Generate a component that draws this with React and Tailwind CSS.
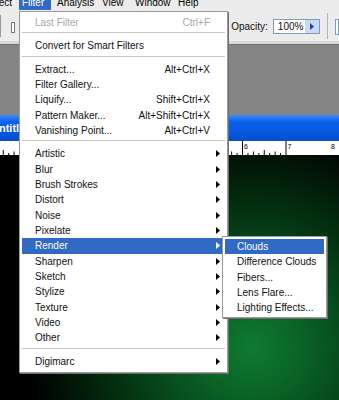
import React from "react";

const FONT = { fontFamily: '"Liberation Sans", Arial, sans-serif' };

function Arrow({ white }) {
  return (
    <svg width="4" height="7" viewBox="0 0 4 7" className="block">
      <path d="M0 0L4 3.5L0 7Z" fill={white ? "#ffffff" : "#000000"} />
    </svg>
  );
}

function Row({ label, shortcut, sub, disabled, active }) {
  return (
    <div
      className={
        active
          ? "h-[15.33px] flex items-center bg-[#316ac5] text-white"
          : disabled
          ? "h-[15.33px] flex items-center text-[#a7a7a7]"
          : "h-[15.33px] flex items-center text-[#111]"
      }
    >
      <span className="flex-1 pl-[13px] whitespace-nowrap">{label}</span>
      {shortcut ? <span className="whitespace-nowrap">{shortcut}</span> : null}
      <span className="w-[15px] pl-[6px] flex items-center">
        {sub ? <Arrow white={active} /> : null}
      </span>
    </div>
  );
}

function Sep() {
  return (
    <div className="h-[8px] pt-[2px]">
      <div className="h-[2px] border-t border-[#c4c4bc] border-b border-b-white" />
    </div>
  );
}

function SubRow({ label, active }) {
  return (
    <div
      className={
        active
          ? "h-[15.33px] flex items-center pl-[12px] bg-[#316ac5] text-white whitespace-nowrap"
          : "h-[15.33px] flex items-center pl-[12px] text-[#111] whitespace-nowrap"
      }
    >
      {label}
    </div>
  );
}

function Ruler() {
  const ticks = [];
  const unit = 43.5;
  const origin = 242;
  for (let i = -48; i <= 8; i++) {
    const x = origin + (i * unit) / 8;
    if (x < -1 || x > 340) continue;
    const m = ((i % 8) + 8) % 8;
    let h = 2;
    if (m === 0) h = 14;
    else if (m === 4) h = 5;
    else if (m === 2 || m === 6) h = 3.5;
    ticks.push(
      <line key={i} x1={x + 0.5} x2={x + 0.5} y1={14 - h} y2={14} stroke="#000" strokeWidth="1" />
    );
  }
  const labels = [
    { x: 244, t: "6" },
    { x: 287.5, t: "7" },
    { x: 331, t: "8" },
  ];
  return (
    <svg width="339" height="14" className="block">
      <rect width="339" height="14" fill="#ffffff" />
      {ticks}
      {labels.map((l) => (
        <text key={l.t} x={l.x} y="7.5" fontSize="7" fontFamily="Liberation Sans, Arial, sans-serif" fill="#000">
          {l.t}
        </text>
      ))}
    </svg>
  );
}

export default function App() {
  return (
    <div className="relative w-[339px] h-[400px] overflow-hidden bg-black text-[10px]" style={FONT}>
      {/* Menu bar */}
      <div className="h-[10px] bg-[#ececec] overflow-hidden flex text-[10px] text-black leading-[10px]">
        <span className="-ml-[19px] w-[38px] text-right pr-[7px] -mt-[2px] whitespace-nowrap">Select</span>
        <span className="w-[32px] h-[10px] bg-[#316ac5] text-white pl-[3px] overflow-hidden whitespace-nowrap">
          <span className="block -mt-[2px]">Filter</span>
        </span>
        <span className="ml-[6px] w-[45px] -mt-[2px] whitespace-nowrap">Analysis</span>
        <span className="w-[33px] -mt-[2px] whitespace-nowrap">View</span>
        <span className="w-[43px] -mt-[2px] whitespace-nowrap">Window</span>
        <span className="-mt-[2px] whitespace-nowrap">Help</span>
      </div>

      {/* Options bar */}
      <div className="h-[34px] bg-[#ececec] border-b-[3px] border-b-[#d8d8d8] flex items-center">
        <div className="w-[2px] h-[22px] bg-[#9a9a9a]" />
        <div className="ml-[10px] w-[8px] h-[11px] border border-[#7a7a7a] bg-white mt-[4px]" />
        <div className="ml-[208px] w-[6px] h-[16px] border border-[#7f9db9] bg-[#dfe8f7] mt-[2px]" />
        <span className="ml-[4px] mt-[2px] text-[10px] text-[#111]">Opacity:</span>
        <div className="ml-[5px] mt-[2px] flex h-[15px] border border-[#7f9db9] bg-white">
          <div className="w-[31px] flex items-center pl-[4px] text-[10px] text-[#111]">100%</div>
          <div className="w-[14px] bg-[#c9daf6] flex items-center justify-center">
            <svg width="4" height="7" viewBox="0 0 4 7"><path d="M0 0L4 3.5L0 7Z" fill="#22409a" /></svg>
          </div>
        </div>
        <div className="ml-[7px] w-[1px] h-[26px] bg-[#b4b4b4]" />
        <div className="ml-[8px] w-[6px] h-[16px] border border-[#7f9db9] bg-white mt-[2px]" />
      </div>

      {/* Gray workspace */}
      <div className="h-[71px] bg-[#858585] border-t border-[#6e6e6e]" />

      {/* Title bar */}
      <div className="h-[26px] bg-[linear-gradient(#3b8cf8_0%,#0b62ea_25%,#0756e0_70%,#0a4cc8_100%)] flex items-center">
        <div className="w-[19px] overflow-hidden">
          <span className="block -ml-[9px] text-white font-bold text-[11px] whitespace-nowrap">Untitl</span>
        </div>
      </div>

      {/* Ruler */}
      <Ruler />

      {/* Canvas */}
      <div className="h-[245px] bg-[radial-gradient(circle_at_252px_192px,#0e7a31_0px,#0b6828_40px,#07501e_85px,#043512_130px,#021c08_175px,#000_225px)]" />

      {/* Filter menu */}
      <div className="absolute left-[19px] top-[11px] w-[209px] bg-white border border-[#9a9a9a] shadow-[1px_1px_0_#6f6f6f] pt-[3px] pb-[3px] px-[2px]">
        <Row label="Last Filter" shortcut="Ctrl+F" disabled />
        <Sep />
        <Row label="Convert for Smart Filters" />
        <Sep />
        <Row label="Extract..." shortcut="Alt+Ctrl+X" />
        <Row label="Filter Gallery..." />
        <Row label="Liquify..." shortcut="Shift+Ctrl+X" />
        <Row label="Pattern Maker..." shortcut="Alt+Shift+Ctrl+X" />
        <Row label="Vanishing Point..." shortcut="Alt+Ctrl+V" />
        <Sep />
        <Row label="Artistic" sub />
        <Row label="Blur" sub />
        <Row label="Brush Strokes" sub />
        <Row label="Distort" sub />
        <Row label="Noise" sub />
        <Row label="Pixelate" sub />
        <Row label="Render" sub active />
        <Row label="Sharpen" sub />
        <Row label="Sketch" sub />
        <Row label="Stylize" sub />
        <Row label="Texture" sub />
        <Row label="Video" sub />
        <Row label="Other" sub />
        <Sep />
        <Row label="Digimarc" sub />
      </div>

      {/* Render submenu */}
      <div className="absolute left-[222px] top-[236px] w-[105px] bg-white border border-[#9a9a9a] shadow-[1px_1px_0_#6f6f6f] pt-[2px] pb-[1px] px-[2px]">
        <SubRow label="Clouds" active />
        <SubRow label="Difference Clouds" />
        <SubRow label="Fibers..." />
        <SubRow label="Lens Flare..." />
        <SubRow label="Lighting Effects..." />
      </div>
    </div>
  );
}
